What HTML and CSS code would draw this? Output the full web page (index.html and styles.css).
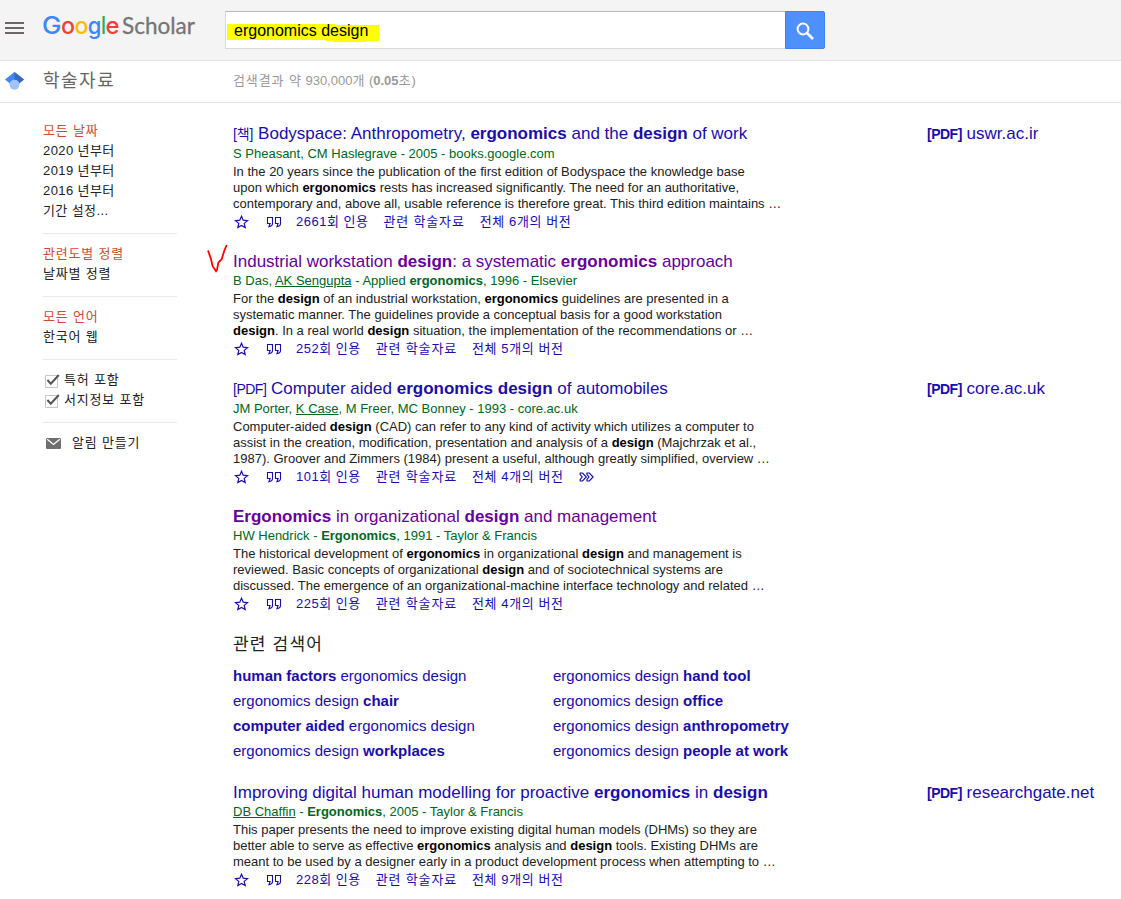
FILE: index.html
```html
<!DOCTYPE html>
<html lang="ko">
<head>
    <meta charset="UTF-8">
    <meta name="viewport" content="width=device-width, initial-scale=1.0">
    <title>ergonomics design - Google Scholar</title>
    <link rel="stylesheet" href="styles.css">
</head>
<body>
    <svg class="defs" width="0" height="0">
        <symbol id="star" viewBox="0 0 15 16"><path d="M7.5 2.2l1.7 4 4.3.4-3.3 2.8 1 4.2-3.7-2.2-3.7 2.2 1-4.2-3.3-2.8 4.3-.4z" fill="none" stroke="currentColor" stroke-width="1.2"/></symbol>
        <symbol id="quote" viewBox="0 0 16 16"><path d="M1.5 3.5h5v6q0 2.6-3.6 3.2l1.2-3.2H1.5zM9.5 3.5h5v6q0 2.6-3.6 3.2l1.2-3.2H9.5z" fill="none" stroke="currentColor" stroke-width="1.1"/></symbol>
        <symbol id="more" viewBox="0 0 15 16"><path d="M1.2 4h2.3l3.8 4-3.8 4H1.2V10.5l2-2.5-2-2.5zM8 4h2.3l3.8 4-3.8 4H8V10.5l2-2.5-2-2.5z" fill="none" stroke="currentColor" stroke-width="1.2"/></symbol>
        <symbol id="check" viewBox="0 0 16 16"><path d="M1.5 3.5h12v12h-12z" fill="#fff" stroke="#c6c6c6"/><path d="M3.4 8l3.4 3.7L14.8 3" fill="none" stroke="#555" stroke-width="2"/></symbol>
    </svg>

    <header class="header">
        <svg class="menu" viewBox="0 0 19 12" width="19" height="12"><path d="M0 1h19M0 6h19M0 11h19" stroke="#6b6767" stroke-width="2"/></svg>
        <svg class="logo" viewBox="0 0 154 36" width="154" height="36">
            <g class="google">
                <text x="-1" y="24" fill="#4285f4" textLength="19.5" lengthAdjust="spacingAndGlyphs">G</text>
                <text x="18" y="24" fill="#ea4335" textLength="14" lengthAdjust="spacingAndGlyphs">o</text>
                <text x="31.6" y="24" fill="#fbbc05" textLength="14" lengthAdjust="spacingAndGlyphs">o</text>
                <text x="44.8" y="24" fill="#4285f4" textLength="13.6" lengthAdjust="spacingAndGlyphs">g</text>
                <text x="58" y="24" fill="#34a853" textLength="5" lengthAdjust="spacingAndGlyphs">l</text>
                <text x="62.4" y="24" fill="#ea4335" textLength="14" lengthAdjust="spacingAndGlyphs">e</text>
            </g>
            <text class="scholar" x="79" y="24" textLength="73" lengthAdjust="spacingAndGlyphs">Scholar</text>
        </svg>
        <form class="search">
            <div class="search-box">
                <svg class="marker" viewBox="0 0 152 18" width="152" height="18"><path d="M0 0h108v1h44v16h-12v1h-34v-1h-7v-1H0z" fill="#ff0"/></svg>
                <span class="query">ergonomics design</span>
            </div>
            <button class="search-btn" type="button" aria-label="검색">
                <svg viewBox="0 0 20 20" width="20" height="20"><circle cx="8" cy="8" r="5.4" fill="none" stroke="#fff" stroke-width="2"/><path d="M12 12l6 6" stroke="#fff" stroke-width="2.6"/></svg>
            </button>
        </form>
    </header>

    <div class="subheader">
        <svg class="cap" viewBox="0 0 19 18" width="19" height="18"><path d="M9.5 0L0 7.6l5.2 4.2h8.6L19 7.6z" fill="#4285f4"/><path d="M9.5 0L19 7.6l-5.2 4.2-4.3-4z" fill="#356ac3"/><circle cx="9.5" cy="12.7" r="5" fill="#a0c3ff"/></svg>
        <div class="section">학술자료</div>
        <div class="count"><span class="ko">검색결과 약</span> 930,000<span class="ko">개</span> (<b>0.05</b><span class="ko">초</span>)</div>
    </div>

    <div class="page">
        <nav class="sidebar">
            <ul>
                <li class="active">모든 날짜</li>
                <li class="year">2020 년부터</li>
                <li class="year">2019 년부터</li>
                <li class="year">2016 년부터</li>
                <li class="year">기간 설정...</li>
            </ul>
            <ul>
                <li class="active">관련도별 정렬</li>
                <li>날짜별 정렬</li>
            </ul>
            <ul>
                <li class="active">모든 언어</li>
                <li>한국어 웹</li>
            </ul>
            <ul>
                <li class="option"><svg class="icon"><use href="#check"/></svg>특허 포함</li>
                <li class="option"><svg class="icon"><use href="#check"/></svg>서지정보 포함</li>
            </ul>
            <ul>
                <li class="alert"><svg viewBox="0 0 15 11" width="15" height="11"><rect width="15" height="11" rx="1.3" fill="#6f6f6f"/><path d="M1.2 1.2l6.3 5.3 6.3-5.3" fill="none" stroke="#fff" stroke-width="1.3"/></svg>알림 만들기</li>
            </ul>
        </nav>

        <main class="results">
            <article class="result">
                <div class="body">
                    <h3><span class="tag book">[책]</span> Bodyspace: Anthropometry, <b>ergonomics</b> and the <b>design</b> of work</h3>
                    <div class="authors">S Pheasant, CM Haslegrave - 2005 - books.google.com</div>
                    <div class="snippet">In the 20 years since the publication of the first edition of Bodyspace the knowledge base<br>upon which <b>ergonomics</b> rests has increased significantly. The need for an authoritative,<br>contemporary and, above all, usable reference is therefore great. This third edition maintains …</div>
                    <div class="links"><svg class="star"><use href="#star"/></svg><svg class="quote"><use href="#quote"/></svg><span class="cited">2661회 인용</span><span class="similar">관련 학술자료</span><span>전체 6개의 버전</span></div>
                </div>
                <div class="source"><b>[PDF]</b> uswr.ac.ir</div>
            </article>

            <article class="result">
                <div class="body">
                    <svg class="tick" viewBox="0 0 22 30" width="22" height="30"><path d="M2 7.5L5 16l1.5 7L10 28.2l1-1.4 1.4-7.3 3.4-3.4L18 8.5 20.7 2" fill="none" stroke="#f00" stroke-width="1.8"/></svg>
                    <h3 class="visited">Industrial workstation <b>design</b>: a systematic <b>ergonomics</b> approach</h3>
                    <div class="authors">B Das, <u>AK Sengupta</u> - Applied <b>ergonomics</b>, 1996 - Elsevier</div>
                    <div class="snippet">For the <b>design</b> of an industrial workstation, <b>ergonomics</b> guidelines are presented in a<br>systematic manner. The guidelines provide a conceptual basis for a good workstation<br><b>design</b>. In a real world <b>design</b> situation, the implementation of the recommendations or …</div>
                    <div class="links"><svg class="star"><use href="#star"/></svg><svg class="quote"><use href="#quote"/></svg><span class="cited">252회 인용</span><span class="similar">관련 학술자료</span><span>전체 5개의 버전</span></div>
                </div>
            </article>

            <article class="result">
                <div class="body">
                    <h3><span class="tag">[PDF]</span> Computer aided <b>ergonomics design</b> of automobiles</h3>
                    <div class="authors">JM Porter, <u>K Case</u>, M Freer, MC Bonney - 1993 - core.ac.uk</div>
                    <div class="snippet">Computer-aided <b>design</b> (CAD) can refer to any kind of activity which utilizes a computer to<br>assist in the creation, modification, presentation and analysis of a <b>design</b> (Majchrzak et al.,<br>1987). Groover and Zimmers (1984) present a useful, although greatly simplified, overview …</div>
                    <div class="links"><svg class="star"><use href="#star"/></svg><svg class="quote"><use href="#quote"/></svg><span class="cited">101회 인용</span><span class="similar">관련 학술자료</span><span>전체 4개의 버전</span><svg class="more"><use href="#more"/></svg></div>
                </div>
                <div class="source"><b>[PDF]</b> core.ac.uk</div>
            </article>

            <article class="result">
                <div class="body">
                    <h3 class="visited"><b>Ergonomics</b> in organizational <b>design</b> and management</h3>
                    <div class="authors">HW Hendrick - <b>Ergonomics</b>, 1991 - Taylor &amp; Francis</div>
                    <div class="snippet">The historical development of <b>ergonomics</b> in organizational <b>design</b> and management is<br>reviewed. Basic concepts of organizational <b>design</b> and of sociotechnical systems are<br>discussed. The emergence of an organizational-machine interface technology and related …</div>
                    <div class="links"><svg class="star"><use href="#star"/></svg><svg class="quote"><use href="#quote"/></svg><span class="cited">225회 인용</span><span class="similar">관련 학술자료</span><span>전체 4개의 버전</span></div>
                </div>
            </article>

            <section class="related">
                <h2>관련 검색어</h2>
                <div class="related-grid">
                    <a><b>human factors</b> ergonomics design</a>
                    <a>ergonomics design <b>hand tool</b></a>
                    <a>ergonomics design <b>chair</b></a>
                    <a>ergonomics design <b>office</b></a>
                    <a><b>computer aided</b> ergonomics design</a>
                    <a>ergonomics design <b>anthropometry</b></a>
                    <a>ergonomics design <b>workplaces</b></a>
                    <a>ergonomics design <b>people at work</b></a>
                </div>
            </section>

            <article class="result">
                <div class="body">
                    <h3>Improving digital human modelling for proactive <b>ergonomics</b> in <b>design</b></h3>
                    <div class="authors"><u>DB Chaffin</u> - <b>Ergonomics</b>, 2005 - Taylor &amp; Francis</div>
                    <div class="snippet">This paper presents the need to improve existing digital human models (DHMs) so they are<br>better able to serve as effective <b>ergonomics</b> analysis and <b>design</b> tools. Existing DHMs are<br>meant to be used by a designer early in a product development process when attempting to …</div>
                    <div class="links"><svg class="star"><use href="#star"/></svg><svg class="quote"><use href="#quote"/></svg><span class="cited">228회 인용</span><span class="similar">관련 학술자료</span><span>전체 9개의 버전</span></div>
                </div>
                <div class="source"><b>[PDF]</b> researchgate.net</div>
            </article>
        </main>
    </div>
</body>
</html>
```
FILE: styles.css
```css
* {
    box-sizing: border-box;
}
body {
    margin: 0;
    height: 899px;
    overflow: hidden;
    background: #fff;
    color: #222;
    font-family: "Liberation Sans", Arial, "Noto Sans CJK KR", sans-serif;
    font-size: 13px;
}
svg {
    display: block;
    flex: none;
}
.defs {
    display: none;
}
h2, h3, ul {
    margin: 0;
    padding: 0;
    font-weight: normal;
    list-style: none;
}
.header {
    display: flex;
    height: 61px;
    background: #f4f4f4;
    border-bottom: 1px solid #e3e3e3;
}
.menu {
    margin: 22px 19px 0 5px;
}
.logo {
    margin: 10px 28px 0 0;
    overflow: visible;
}
.google {
    font: 500 24px Inter, sans-serif;
}
.scholar {
    font: 400 22.5px Lato, sans-serif;
    fill: #757575;
    stroke: #757575;
    stroke-width: 0.3px;
}
.search {
    display: flex;
    margin-top: 11px;
    height: 38px;
}
.search-box {
    position: relative;
    width: 560px;
    padding-left: 8px;
    background: #fff;
    border: 1px solid #d9d9d9;
    border-top-color: #b9b9b9;
    border-right: 0;
    font-size: 16px;
    line-height: 37px;
    color: #000;
}
.marker {
    position: absolute;
    left: 1px;
    top: 12px;
}
.query {
    position: relative;
}
.search-btn {
    display: flex;
    width: 40px;
    padding: 9px 0 0 9px;
    background: #4d90fe;
    border: 1px solid #3f83ee;
    border-radius: 0 2px 2px 0;
}
.subheader {
    display: flex;
    height: 42px;
    border-bottom: 1px solid #e5e5e5;
    line-height: 40px;
}
.cap {
    margin: 11px 19px 0 5px;
}
.section {
    width: 190px;
    font-size: 18px;
    letter-spacing: 1.5px;
    color: #666;
}
.count {
    color: #999;
}
.ko {
    letter-spacing: 0.9px;
}
.page {
    display: flex;
    padding: 18px 0 0 43px;
}
.sidebar {
    width: 134px;
    margin-right: 56px;
    line-height: 20px;
    letter-spacing: 0.8px;
}
.sidebar ul {
    padding-bottom: 12px;
    margin-bottom: 10px;
    border-bottom: 1px solid #ebebeb;
}
.sidebar ul:last-child {
    border: 0;
}
.active {
    color: #d14836;
}
.year {
    letter-spacing: 0.4px;
}
.option {
    display: flex;
}
.option .icon {
    width: 16px;
    height: 16px;
    margin: 2px 4px 0 1px;
}
.alert {
    display: flex;
    align-items: center;
    gap: 11px;
    padding-left: 3px;
}
.result {
    display: flex;
    height: 127.6px;
}
.body {
    position: relative;
    width: 694px;
    white-space: nowrap;
}
.tick {
    position: absolute;
    left: -27px;
    top: -6px;
}
h3 {
    height: 23.6px;
    line-height: 25px;
    font-size: 17px;
    color: #1a0dab;
}
.visited {
    color: #609;
}
.tag {
    font-size: 14px;
    letter-spacing: -0.5px;
}
.book {
    letter-spacing: -0.1px;
}
.authors {
    height: 19px;
    line-height: 17px;
    color: #006621;
}
.snippet {
    height: 47px;
    line-height: 16px;
}
.snippet b {
    color: #000;
}
.links {
    display: flex;
    height: 22px;
    padding-left: 1px;
    line-height: 22px;
    color: #1a0dab;
}
.links span {
    margin-right: 15px;
    letter-spacing: 0.6px;
}
.links .cited {
    letter-spacing: 0.5px;
}
.links .similar {
    letter-spacing: 0.85px;
}
.star {
    width: 15px;
    height: 16px;
    margin: 3px 17px 0 0;
}
.quote {
    width: 16px;
    height: 16px;
    margin: 3px 14px 0 0;
}
.more {
    width: 15px;
    height: 16px;
    margin-top: 3px;
}
.source {
    font-size: 17px;
    line-height: 25px;
    color: #1a0dab;
    white-space: nowrap;
}
.source b {
    font-size: 14px;
    letter-spacing: -0.5px;
}
.related {
    height: 148.3px;
    padding-top: 1px;
    color: #222;
}
.related h2 {
    height: 31px;
    line-height: 25px;
    font-size: 17px;
    letter-spacing: 1.2px;
}
.related-grid {
    display: grid;
    grid-template-columns: 320px 320px;
    grid-auto-rows: 25px;
    line-height: 25px;
    font-size: 15px;
    color: #1a0dab;
}
```
